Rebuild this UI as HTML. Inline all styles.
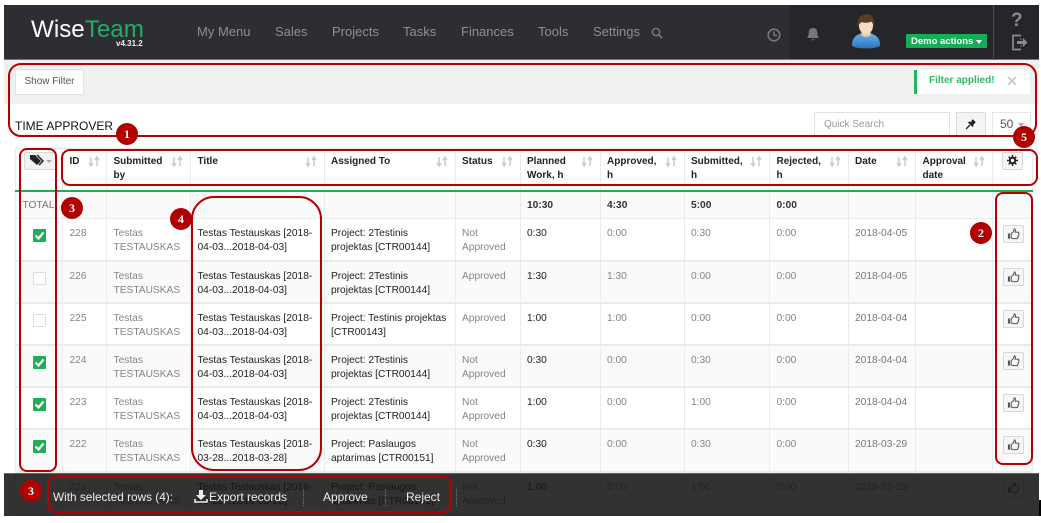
<!DOCTYPE html>
<html><head><meta charset="utf-8"><style>
html,body{margin:0;padding:0;background:#fff}
body{width:1041px;height:523px;position:relative;overflow:hidden;font-family:"Liberation Sans",sans-serif;font-size:10.2px;color:#222}
.a{position:absolute;white-space:nowrap}
.nav{top:24px;font-size:13px;color:#8e8f93;line-height:16px}
table{position:absolute;left:15px;top:148px;width:1017px;border-collapse:collapse;table-layout:fixed;font-size:10.2px;line-height:14px}
td,th{border:1px solid #ebebeb;border-width:0 1px 2px 1px;padding:0 0 0 6.5px;vertical-align:top;text-align:left;position:relative}
th{font-size:10px;font-weight:bold;color:#222;height:42px;padding-top:6px;box-sizing:border-box;border-top:1px solid #e4e4e4;border-bottom:2px solid #1fae54}
tr.t td{height:28px;box-sizing:border-box;font-weight:bold;padding-top:7px;background:#fafafa;color:#333;border-bottom-width:1px}
tr.r td{height:42.2px;box-sizing:border-box;padding-top:8px;color:#858585}
tr.r:nth-child(even) td{background:#fafafa}
td.k{color:#222!important}
td.s{color:#777!important}
.sort{position:absolute;right:7px;top:7px;width:12px;height:11px}
.cb{position:absolute;left:17px;top:10px;width:13px;height:13px;box-sizing:border-box;border:1px solid #ddd;background:#fff;border-radius:1px}
.cb.on{background:#1fae54;border-color:#1fae54}
.cb svg{position:absolute;left:-1px;top:-1px}
.tb{position:absolute;left:10px;top:6px;width:21px;height:18px;box-sizing:border-box;background:#f6f6f6;border:1px solid #d8d8d8;border-radius:2px}
.tb svg{position:absolute;left:3px;top:1px}
.b{position:absolute;width:22px;height:22px;border-radius:50%;background:#b00000;color:#fff;font:bold 12px/22px "Liberation Serif",serif;text-align:center}
</style></head><body>
<svg width="0" height="0" style="position:absolute"><defs>
<symbol id="so" viewBox="0 0 12 11"><path d="M3 1v8M1 7l2 3 2-3M9 10V2M7 4l2-3 2 3" fill="none" stroke="#cfcfcf" stroke-width="1.600"/></symbol>
<symbol id="ck" viewBox="0 0 13 13"><path d="M2.500 6.500l3 3 5-6" fill="none" stroke="#fff" stroke-width="2.200"/></symbol>
<symbol id="th" viewBox="0 0 14 14"><path d="M1 7h2.200v5.500H1z" fill="#555"/><path d="M4.500 7L7 5 7.800 2c1.300 0 1.600 1.300 1 3.500h3c1 0 1.200 1 .7 1.700.5.800.3 1.500-.3 2 .2.800 0 1.400-.6 1.800 0 1-.6 1.500-1.500 1.500H7c-1 0-1.600-.5-2.500-.7z" fill="none" stroke="#555" stroke-width="1.100"/></symbol>
</defs></svg>

<!-- navbar -->
<div class="a" style="left:4px;top:5px;width:1035px;height:55px;background:#2d2e33;border-bottom:1px solid #777;box-sizing:border-box"></div>
<div class="a" style="left:790px;top:5px;width:249px;height:54px;background:#25262a"></div>
<div class="a" style="left:993px;top:5px;width:1px;height:55px;background:#4c4d51"></div>
<div class="a" style="left:31px;top:15px;font-size:24.200px;line-height:30px;color:#fff">Wise<span style="color:#1fae6a">Team</span></div>
<div class="a" style="left:116px;top:39px;font-size:8px;font-weight:bold;line-height:9px;color:#eee">v4.31.2</div>
<div class="a nav" style="left:197px">My Menu</div>
<div class="a nav" style="left:275px">Sales</div>
<div class="a nav" style="left:332px">Projects</div>
<div class="a nav" style="left:403px">Tasks</div>
<div class="a nav" style="left:461px">Finances</div>
<div class="a nav" style="left:538px">Tools</div>
<div class="a nav" style="left:593px">Settings</div>
<svg class="a" style="left:651px;top:27px" width="12" height="12" viewBox="0 0 12 12"><circle cx="5" cy="5" r="3.600" fill="none" stroke="#77787c" stroke-width="1.500"/><path d="M7.700 7.700L11 11" stroke="#77787c" stroke-width="1.800"/></svg>
<svg class="a" style="left:767px;top:28px" width="14" height="14" viewBox="0 0 14 14"><circle cx="7" cy="7" r="5.800" fill="none" stroke="#77787c" stroke-width="1.600"/><path d="M7 3.500V7.500h3" fill="none" stroke="#77787c" stroke-width="1.500"/></svg>
<svg class="a" style="left:806px;top:27px" width="14" height="15" viewBox="0 0 14 15"><path d="M7 1c-3 0-4.300 2-4.300 5 0 2.500-.7 3.500-1.700 5h12c-1-1.500-1.700-2.500-1.700-5 0-3-1.300-5-4.300-5z" fill="#77787c"/><path d="M5.300 12.300a1.800 1.800 0 0 0 3.400 0z" fill="#77787c"/></svg>
<svg class="a" style="left:851px;top:13px" width="30" height="36" viewBox="0 0 32 38"><defs><linearGradient id="bl" x1="0" y1="0" x2="0" y2="1"><stop offset="0" stop-color="#6ab2ea"/><stop offset="1" stop-color="#2a74bb"/></linearGradient></defs><path d="M1 34c0-8 5-11 10-12.500h10C26 23 31 26 31 34c0 2-6 3.500-15 3.500S1 36 1 34z" fill="url(#bl)"/><path d="M11 19v4c1 3 9 3 10 0v-4z" fill="#eac9a8"/><ellipse cx="16" cy="13" rx="7.500" ry="9.500" fill="#f6dcc0"/><path d="M7.500 15C5.500 7 10 1 16.500 1S26 6 24.500 15c-.5-3-1.500-5-3-6-3 1.500-7 1.500-10 .5-2 1-3.500 3-4 5.500z" fill="#5b3a26"/></svg>
<div class="a" style="left:906px;top:34px;width:81px;height:14px;background:#15ad56;border-radius:1px;color:#fff;font-size:9.500px;font-weight:bold;line-height:15px;text-indent:5px">Demo actions</div>
<div class="a" style="left:976px;top:40px;width:0;height:0;border:3.500px solid transparent;border-top:4px solid #fff;border-bottom:0"></div>
<div class="a" style="left:1011px;top:10px;font-size:19px;font-weight:bold;line-height:22px;color:#8b8c90">?</div>
<svg class="a" style="left:1011px;top:34px" width="17" height="17" viewBox="0 0 17 17"><path d="M10 1.500H2v14h8M10 5.500v-1M10 12.500v-1" fill="none" stroke="#8b8c90" stroke-width="1.700"/><path d="M6 7h6V4l4.500 4.500L12 13v-3H6z" fill="#8b8c90"/></svg>

<!-- filter bar -->
<div class="a" style="left:4px;top:60px;width:1035px;height:44px;background:#f0f0f0"></div>
<div class="a" style="left:15px;top:69px;width:69px;height:26px;box-sizing:border-box;background:#fff;border:1px solid #e2e2e2;color:#555;font-size:10px;line-height:24px;text-align:center">Show Filter</div>
<div class="a" style="left:914px;top:70px;width:116px;height:24px;box-sizing:border-box;background:#fff;border-left:3px solid #1fb85c;color:#2dbb66;font-size:10px;font-weight:bold;line-height:22px;text-indent:12px">Filter applied!</div>
<div class="a" style="left:1006px;top:73px;color:#ccc;font-size:14px;font-weight:bold;line-height:16px">✕</div>

<!-- title row -->
<div class="a" style="left:15px;top:119px;font-size:12px;line-height:15px;color:#111">TIME APPROVER</div>
<div class="a" style="left:814px;top:112px;width:136px;height:25px;box-sizing:border-box;border:1px solid #e2e2e2;background:#fff;color:#999;font-size:10px;line-height:23px;text-indent:9px">Quick Search</div>
<div class="a" style="left:956px;top:112px;width:30px;height:25px;box-sizing:border-box;border:1px solid #ddd;background:#f4f4f4"></div>
<svg class="a" style="left:965px;top:118px" width="12" height="12" viewBox="0 0 12 12"><path d="M1 11l4-4M4 4.500L7.500 8 9 4z" stroke="#222" stroke-width="1.300" fill="#222"/><path d="M7 2l3 3" stroke="#222" stroke-width="2"/></svg>
<div class="a" style="left:992px;top:112px;width:39px;height:25px;box-sizing:border-box;border:1px solid #e8e8e8;background:#fff;color:#555;font-size:12px;line-height:23px;text-indent:7px">50</div>
<div class="a" style="left:1018px;top:123px;width:0;height:0;border:3px solid transparent;border-top:4px solid #aaa;border-bottom:0"></div>

<!-- table -->
<table>
<colgroup><col style="width:47px"><col style="width:44px"><col style="width:84px"><col style="width:133.500px"><col style="width:131px"><col style="width:65px"><col style="width:80px"><col style="width:84px"><col style="width:85.500px"><col style="width:78.500px"><col style="width:67.500px"><col style="width:76.500px"><col style="width:40.500px"></colgroup>
<tr>
<th style="padding:0"><div class="tb" style="left:7.500px;top:3px;width:32px;height:18px;background:#f3f3f3"></div><svg class="a" style="left:13px;top:5px" width="16" height="12" viewBox="0 0 16 12"><path d="M1 1h5l6 6-4 4-7-6z" fill="#222"/><path d="M8 1l6 6-4 4" fill="none" stroke="#222" stroke-width="1.500"/></svg><div class="a" style="left:30px;top:11px;width:0;height:0;border:3px solid transparent;border-top:3px solid #aaa;border-bottom:0"></div></th>
<th>ID<svg class="sort" style="right:6px"><use href="#so"/></svg></th>
<th>Submitted<br>by<svg class="sort"><use href="#so"/></svg></th>
<th>Title<svg class="sort"><use href="#so"/></svg></th>
<th>Assigned To<svg class="sort"><use href="#so"/></svg></th>
<th>Status<svg class="sort"><use href="#so"/></svg></th>
<th>Planned<br>Work, h<svg class="sort"><use href="#so"/></svg></th>
<th>Approved,<br>h<svg class="sort"><use href="#so"/></svg></th>
<th>Submitted,<br>h<svg class="sort"><use href="#so"/></svg></th>
<th>Rejected,<br>h<svg class="sort"><use href="#so"/></svg></th>
<th>Date<svg class="sort"><use href="#so"/></svg></th>
<th>Approval<br>date<svg class="sort"><use href="#so"/></svg></th>
<th style="padding:0"><div class="tb" style="left:9px;top:3px;width:21px;height:18px"></div><svg class="a" style="left:14px;top:6px" width="11" height="11" viewBox="0 0 11 11"><path d="M5.500 0v11M0 5.500h11M1.700 1.700l7.600 7.600M9.300 1.700L1.700 9.300" stroke="#222" stroke-width="1.500"/><circle cx="5.500" cy="5.500" r="3.700" fill="#222"/><circle cx="5.500" cy="5.500" r="1.700" fill="#f6f6f6"/></svg></th>
</tr>
<tr class="t"><td style="font-weight:normal;color:#777">TOTAL</td><td></td><td></td><td></td><td></td><td></td><td>10:30</td><td>4:30</td><td>5:00</td><td>0:00</td><td></td><td></td><td></td></tr>
<tr class="r"><td><div class="cb on"><svg width="13" height="13"><use href="#ck"/></svg></div></td><td>228</td><td>Testas<br>TESTAUSKAS</td><td class="k">Testas Testauskas [2018-<br>04-03...2018-04-03]</td><td class="k">Project: 2Testinis<br>projektas [CTR00144]</td><td>Not<br>Approved</td><td class="k">0:30</td><td>0:00</td><td>0:30</td><td>0:00</td><td class="s">2018-04-05</td><td></td><td><div class="tb"><svg width="13" height="13"><use href="#th"/></svg></div></td></tr>
<tr class="r"><td><div class="cb"></div></td><td>226</td><td>Testas<br>TESTAUSKAS</td><td class="k">Testas Testauskas [2018-<br>04-03...2018-04-03]</td><td class="k">Project: 2Testinis<br>projektas [CTR00144]</td><td>Approved</td><td class="k">1:30</td><td>1:30</td><td>0:00</td><td>0:00</td><td class="s">2018-04-05</td><td></td><td><div class="tb"><svg width="13" height="13"><use href="#th"/></svg></div></td></tr>
<tr class="r"><td><div class="cb"></div></td><td>225</td><td>Testas<br>TESTAUSKAS</td><td class="k">Testas Testauskas [2018-<br>04-03...2018-04-03]</td><td class="k">Project: Testinis projektas<br>[CTR00143]</td><td>Approved</td><td class="k">1:00</td><td>1:00</td><td>0:00</td><td>0:00</td><td class="s">2018-04-04</td><td></td><td><div class="tb"><svg width="13" height="13"><use href="#th"/></svg></div></td></tr>
<tr class="r"><td><div class="cb on"><svg width="13" height="13"><use href="#ck"/></svg></div></td><td>224</td><td>Testas<br>TESTAUSKAS</td><td class="k">Testas Testauskas [2018-<br>04-03...2018-04-03]</td><td class="k">Project: 2Testinis<br>projektas [CTR00144]</td><td>Not<br>Approved</td><td class="k">0:30</td><td>0:00</td><td>0:30</td><td>0:00</td><td class="s">2018-04-04</td><td></td><td><div class="tb"><svg width="13" height="13"><use href="#th"/></svg></div></td></tr>
<tr class="r"><td><div class="cb on"><svg width="13" height="13"><use href="#ck"/></svg></div></td><td>223</td><td>Testas<br>TESTAUSKAS</td><td class="k">Testas Testauskas [2018-<br>04-03...2018-04-03]</td><td class="k">Project: 2Testinis<br>projektas [CTR00144]</td><td>Not<br>Approved</td><td class="k">1:00</td><td>0:00</td><td>1:00</td><td>0:00</td><td class="s">2018-04-04</td><td></td><td><div class="tb"><svg width="13" height="13"><use href="#th"/></svg></div></td></tr>
<tr class="r"><td><div class="cb on"><svg width="13" height="13"><use href="#ck"/></svg></div></td><td>222</td><td>Testas<br>TESTAUSKAS</td><td class="k">Testas Testauskas [2018-<br>03-28...2018-03-28]</td><td class="k">Project: Paslaugos<br>aptarimas [CTR00151]</td><td>Not<br>Approved</td><td class="k">0:30</td><td>0:00</td><td>0:30</td><td>0:00</td><td class="s">2018-03-29</td><td></td><td><div class="tb"><svg width="13" height="13"><use href="#th"/></svg></div></td></tr>
<tr class="r"><td></td><td>221</td><td>Testas<br>TESTAUSKAS</td><td class="k">Testas Testauskas [2018-<br>03-28...2018-03-28]</td><td class="k">Project: Paslaugos<br>aptarimas [CTR00151]</td><td>Not<br>Approved</td><td class="k">1:00</td><td>0:00</td><td>1:00</td><td>0:00</td><td class="s">2018-03-29</td><td></td><td><div class="tb"><svg width="13" height="13"><use href="#th"/></svg></div></td></tr>
</table>

<!-- bottom overlay -->
<div class="a" style="left:4px;top:473px;width:1035px;height:43px;background:rgba(20,20,20,.87);border-top:1px solid #666;box-sizing:border-box"></div>
<div class="a" style="left:0;top:516px;width:1041px;height:7px;background:#fff"></div>
<div class="a" style="left:1039px;top:500px;width:2px;height:16px;background:#000"></div>
<div class="a" style="left:53px;top:489px;font-size:11.800px;line-height:16px;color:#eee">With selected rows (4):</div>
<svg class="a" style="left:194px;top:489px" width="14" height="14" viewBox="0 0 14 14"><path d="M5 1h4v5h3L7 11 2 6h3z" fill="#eee"/><path d="M1 10v3h12v-3" fill="none" stroke="#eee" stroke-width="1.600"/></svg>
<div class="a" style="left:209px;top:489px;font-size:12px;line-height:16px;color:#eee">Export records</div>
<div class="a" style="left:323px;top:489px;font-size:12px;line-height:16px;color:#eee">Approve</div>
<div class="a" style="left:406px;top:489px;font-size:12px;line-height:16px;color:#eee">Reject</div>
<div class="a" style="left:303px;top:489px;height:17px;border-left:1px dotted #777"></div>
<div class="a" style="left:385px;top:489px;height:17px;border-left:1px dotted #777"></div>
<div class="a" style="left:456px;top:489px;height:17px;border-left:1px dotted #777"></div>

<!-- annotations -->
<svg class="a" style="left:0;top:0" width="1041" height="523" fill="none" stroke="#b80000" stroke-width="2">
<rect x="9" y="64" width="1027" height="72" rx="12"/>
<rect x="62" y="150" width="975" height="35" rx="8"/>
<rect x="20" y="149" width="36" height="322" rx="7"/>
<rect x="192" y="197" width="129" height="273" rx="22"/>
<rect x="996" y="193" width="36" height="271" rx="7"/>
<rect x="48" y="477" width="403" height="35" rx="8"/>
</svg>
<div class="b" style="left:116px;top:123px">1</div>
<div class="b" style="left:1013px;top:126px">5</div>
<div class="b" style="left:61px;top:197px">3</div>
<div class="b" style="left:170px;top:208px">4</div>
<div class="b" style="left:970px;top:222px">2</div>
<div class="b" style="left:20px;top:480px">3</div>
</body></html>
